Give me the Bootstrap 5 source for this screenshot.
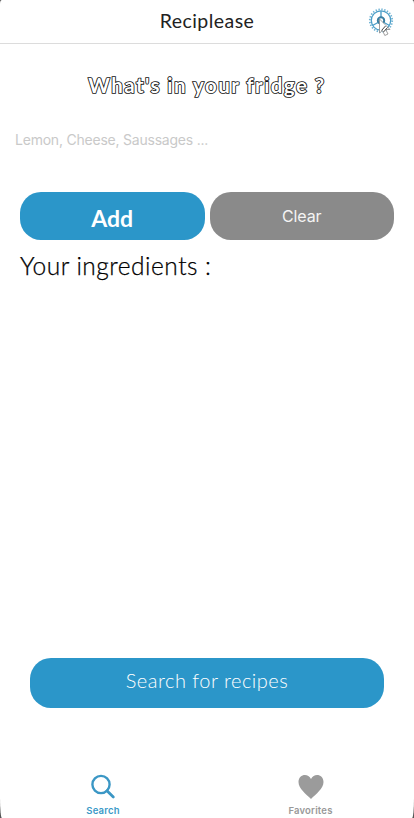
<!DOCTYPE html>
<html lang="en">
<head>
<meta charset="utf-8">
<meta name="viewport" content="width=device-width, initial-scale=1">
<title>Reciplease</title>
<link href="https://cdn.jsdelivr.net/npm/bootstrap@5.3.0/dist/css/bootstrap.min.css" rel="stylesheet">
<style>
  body { background: #555; font-family: Inter, "Liberation Sans", sans-serif; }
  .screen { height: 818px; overflow: hidden; border-radius: 2px 2px 2px 2px / 4px 4px 20px 20px; }
  .script { font-family: Lato, "Open Sans", sans-serif; font-weight: 300; white-space: nowrap; line-height: 1; }
  .topbar { height: 44px; border-bottom: 1px solid #dcdcdc; }
  .brand { font-size: 19.5px; font-weight: 400; color: #222; letter-spacing: .45px; padding-top: 11px; }
  .side { width: 54px; }
  .gear { display: block; margin: 7px 0 0 8px; }
  .question { height: 80px; padding-top: 31px; }
  .question span { font-family: Lato, sans-serif; font-weight: 700; font-size: 20.5px; line-height: 1; letter-spacing: 1.45px; color: #fff; -webkit-text-stroke: 1.7px #111; paint-order: stroke fill; white-space: nowrap; }
  .entry { height: 68px; padding: 5px 15px; font-size: 14px; }
  .entry input { color: #c9c9c9; letter-spacing: -.22px; font-size: 14px; line-height: 18px; }
  .entry input::placeholder { color: #c9c9c9; opacity: 1; }
  .pill { border-radius: 21px; height: 48px; border: 0; color: #fff; }
  .blue, .blue:hover { background: #2b96c9; color: #fff; }
  .gray, .gray:hover { background: #8a8a8a; color: #f4f4f4; font-size: 16px; letter-spacing: -.1px; }
  .buttons { gap: 5px; padding: 0 20px; }
  .add { font-family: Lato, sans-serif; font-weight: 700; font-size: 23px; line-height: 1; letter-spacing: 0; padding-top: 10px; }
  .heading { font-size: 24.5px; font-weight: 300; color: #000; padding: 14px 0 0 20px; letter-spacing: .5px; -webkit-text-stroke: .25px #000; }
  .search { height: 50px; margin: 0 30px 62px; font-size: 20px; padding: 0 0 6px; letter-spacing: .5px; }
  .tabs { height: 48px; font-size: 9.5px; font-weight: 600; line-height: 12px; color: #999; }
  .tabs .active { color: #3b9ac8; padding-right: 1px; }
  .tabs span { letter-spacing: .2px; }
  .tabs svg { margin: 3px 0 4px; }
</style>
</head>
<body>
<div class="screen bg-white d-flex flex-column">
  <header class="topbar d-flex justify-content-between flex-shrink-0">
    <div class="side"></div>
    <div class="script brand">Reciplease</div>
    <div class="side">
      <svg class="gear" width="32" height="32" viewBox="0 0 32 32" fill="none">
        <circle cx="13" cy="13.500" r="11.200" stroke="#6fb2d3" stroke-width="1.8" stroke-dasharray="1.4 1.530"/>
        <circle cx="13" cy="13.500" r="9.700" stroke="#4d9fc8" stroke-width="1.3"/>
        <path d="M13 4v7M4.500 18.500l5.500-3M21.500 18.500l-5.500-3" stroke="#4d9fc8" stroke-width="1.4"/>
        <circle cx="13" cy="13.500" r="3.200" stroke="#397fa3" stroke-width="2"/>
        <path d="M11.500 12v14l3-2.500 2.300 5 3.200-1.500-2.300-4.500h4.300z" fill="#fff" stroke="#888" stroke-width=".8"/>
        <path d="M13.500 23.500l4-4.500M15.500 25l4-4.500" stroke="#444" stroke-width="1"/>
      </svg>
    </div>
  </header>
  <div class="question text-center flex-shrink-0"><span>What's in your fridge ?</span></div>
  <div class="entry flex-shrink-0"><input class="border-0 p-0 w-100 bg-transparent" type="text" placeholder="Lemon, Cheese, Saussages ..."></div>
  <div class="buttons d-flex flex-shrink-0">
    <button class="btn pill blue add w-50">Add</button>
    <button class="btn pill gray w-50">Clear</button>
  </div>
  <div class="script heading">Your ingredients :</div>
  <div class="flex-grow-1"></div>
  <button class="btn pill blue script search flex-shrink-0">Search for recipes</button>
  <nav class="tabs d-flex flex-shrink-0">
    <div class="w-50 d-flex flex-column align-items-center active">
      <svg width="26" height="28" viewBox="0 0 26 28" fill="none" stroke="#3b97c5" stroke-width="2.4"><circle cx="11" cy="11.500" r="8.600"/><path d="M17 17.700l6.300 6.300" stroke-width="2.800" stroke-linecap="round"/></svg>
      <span>Search</span>
    </div>
    <div class="w-50 d-flex flex-column align-items-center">
      <svg width="26" height="28" viewBox="0 0 26 28" fill="#9b9b9b"><path d="M13 26C8 21 .5 15.500 .5 9 .5 1 10-.5 13 6 16-.5 25.500 1 25.500 9 25.500 15.500 18 21 13 26z"/></svg>
      <span>Favorites</span>
    </div>
  </nav>
</div>
<script src="https://cdn.jsdelivr.net/npm/bootstrap@5.3.0/dist/js/bootstrap.bundle.min.js"></script>
</body>
</html>
